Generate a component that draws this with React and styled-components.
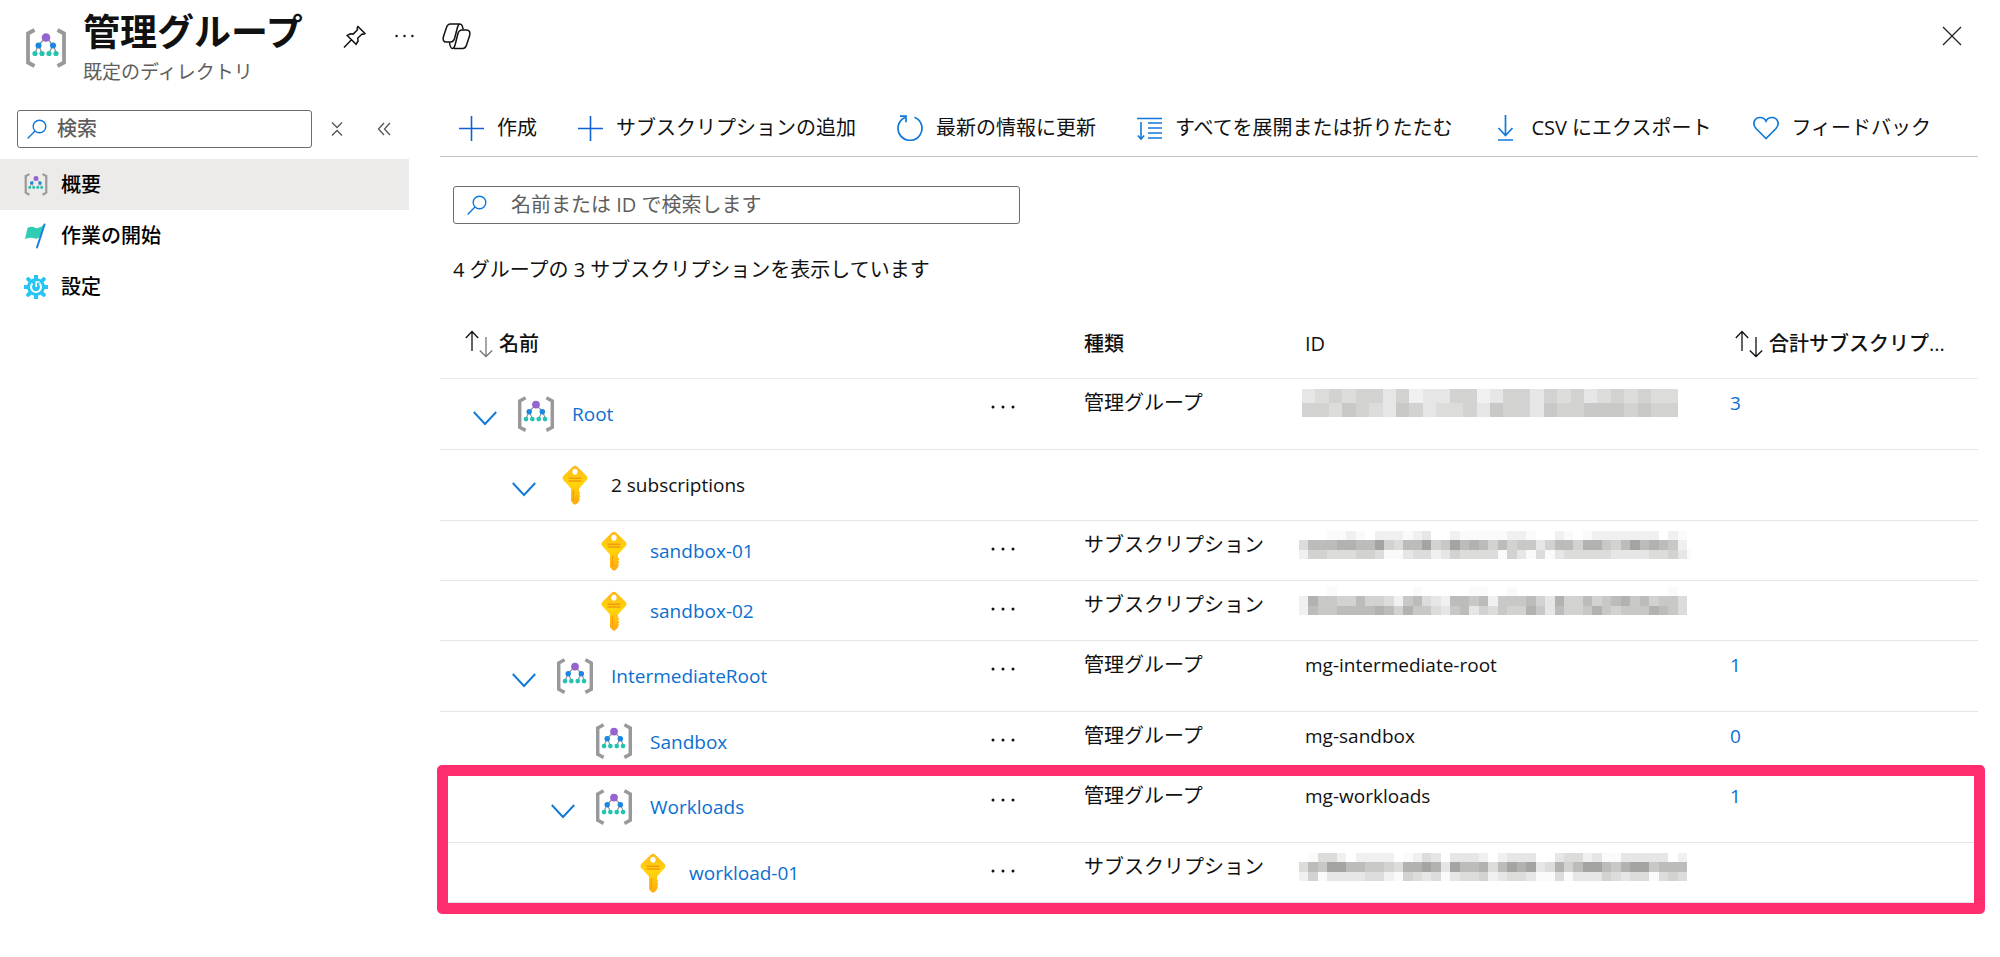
import styled, { createGlobalStyle } from "styled-components";

const shades = {
  a: "#fafafa",
  b: "#f0f0f0",
  c: "#e6e6e6",
  d: "#dcdcdb",
  e: "#d2d2d1",
  f: "#c8c8c7",
  g: "#bcbcbb",
  h: "#b2b2b1",
  i: "#a4a4a3",
};

// masked ids: one letter per block, see shades
const rows = [
  {
    name: "Root",
    level: 0,
    kind: "group",
    open: true,
    tall: true,
    type: "管理グループ",
    mosaic: {
      x: 3,
      y: 0,
      w: 376 / 28,
      h: 14,
      lines: ["cdedeecebcceebceecedecdededd", "eedfedcfecddecfeecfeefffefee"],
    },
    total: 3,
  },
  { name: "2 subscriptions", level: 1, kind: "key", open: true, tall: true, plain: true },
  {
    name: "sandbox-01",
    level: 2,
    kind: "key",
    type: "サブスクリプション",
    mosaic: {
      x: 0,
      y: 0,
      w: 388 / 41,
      h: 28 / 3,
      lines: [
        "...aaba.bbbabc..baaaaabba..ba.abbbbbbb.ba",
        "dggghhggiedggiefighgegeffceggehhfegighgfb",
        "beedddeedaacddbceddddaecadacdddddccccddeca",
      ],
    },
  },
  {
    name: "sandbox-02",
    level: 2,
    kind: "key",
    type: "サブスクリプション",
    mosaic: {
      x: 0,
      y: -4,
      w: 388 / 41,
      h: 28 / 3,
      lines: [
        "...a........a.....aa..a................a.",
        "bhffeegeedbfgdcbggfgbfffgecheegefghfgeffd",
        "bgffgggghgehffdcfgcedfeehfcgeefhfefffhgfd",
      ],
    },
  },
  {
    name: "IntermediateRoot",
    level: 1,
    kind: "group",
    open: true,
    tall: true,
    type: "管理グループ",
    id: "mg-intermediate-root",
    total: 1,
  },
  { name: "Sandbox", level: 2, kind: "group", type: "管理グループ", id: "mg-sandbox", total: 0 },
  {
    name: "Workloads",
    level: 2,
    kind: "group",
    open: true,
    tall: true,
    type: "管理グループ",
    id: "mg-workloads",
    total: 1,
  },
  {
    name: "workload-01",
    level: 3,
    kind: "key",
    type: "サブスクリプション",
    mosaic: {
      x: 0,
      y: 0,
      w: 388 / 41,
      h: 28 / 3,
      lines: [
        ".addb.bbbb.abdc.cccb.bccc..cddbcaaccccc.b",
        "dgfiiggffedhhihcigghdgihicdhegiigfhiifggg",
        "beaccccddbaedcdacddebcddcaadacccedcddaded",
      ],
    },
  },
];

function GroupIcon({ width }) {
  return (
    <svg width={width} viewBox="0 0 42 40" fill="none">
      <path d="M9.5 2 3 5.5v29L9.5 38M32.5 2 39 5.5v29L32.5 38" stroke="#999" strokeWidth="3.8" />
      <path
        d="M21 9.5 13.5 17 10 25M13.5 17l3.5 8M21 9.5l7 7.500 3.500 8M28 17l-4 8"
        stroke="#8a8a8a"
        strokeWidth="1.2"
      />
      <circle cx="21" cy="9.5" r="4.3" fill="#9464d0" />
      <circle cx="13.5" cy="17.5" r="3" fill="#1787e0" />
      <circle cx="28" cy="17.5" r="3" fill="#1787e0" />
      <circle cx="10" cy="25.5" r="2.6" fill="#22c3b0" />
      <circle cx="17" cy="25.5" r="2.6" fill="#22c3b0" />
      <circle cx="24" cy="25.5" r="2.6" fill="#22c3b0" />
      <circle cx="31" cy="25.5" r="2.6" fill="#22c3b0" />
    </svg>
  );
}

function KeyIcon() {
  return (
    <svg width="26" height="40" viewBox="0 0 26 40">
      <defs>
        <linearGradient id="gold" x1="0" y1="0" x2="0" y2="1">
          <stop offset="0" stopColor="#ffb61a" />
          <stop offset="0.45" stopColor="#ffd60a" />
          <stop offset="1" stopColor="#ffa80f" />
        </linearGradient>
      </defs>
      <path
        fill="url(#gold)"
        fillRule="evenodd"
        d="M11 1.4q2-1.4 4 0l9.5 9.3q2 2.3 0 4.6L17 23.500v3l1.500 1.500-1.500 1.600 1.500 1.600-1.500 1.600 1 1.200-1 1.500v1L14.500 39q-1.500 1.200-3 0L9 36V23.500L1.500 15.300q-2-2.300 0-4.600zM13 3.700a2.600 3 0 1 0 0 6 2.600 3 0 1 0 0-6z"
      />
      <path d="M6.5 13.300h13M6.500 16h13" stroke="#f59b0b" strokeWidth="1.4" />
      <path d="M11.5 25v11" stroke="#ff9a10" strokeWidth="1.2" />
    </svg>
  );
}

function FlagIcon() {
  return (
    <svg width="24" height="26" viewBox="0 0 24 26" fill="none">
      <path d="M3.5 5q4.500-2.500 8 0 3.500 1 8-3L16 13.500q-3 3.500-6.500 1.500-3-1-8.500 1z" fill="#2fcdb4" />
      <path d="M20.5 1.5 13 24.500" stroke="#1a7de0" strokeWidth="2" strokeLinecap="round" />
    </svg>
  );
}

function GearIcon() {
  return (
    <svg width="24" height="24" viewBox="0 0 24 24" fill="none">
      <circle cx="12" cy="12" r="9" fill="#27c5f3" />
      <path
        d="M12 .8v22.400M.8 12h22.400M4.200 4.200l15.600 15.600M19.800 4.200 4.200 19.800"
        stroke="#27c5f3"
        strokeWidth="4"
        strokeLinecap="round"
      />
      <path d="M8.500 8.500a5 5 0 1 0 7 0" stroke="#fff" strokeWidth="2" />
      <path d="M12.200 12V7h3.500" stroke="#fff" strokeWidth="1.600" />
    </svg>
  );
}

function SearchIcon() {
  return (
    <svg width="20" height="20" viewBox="0 0 20 20" fill="none" stroke="#0f78d8" strokeWidth="1.4">
      <circle cx="12.5" cy="7.5" r="6.3" />
      <path d="M8 12 .6 19.4" />
    </svg>
  );
}

function PlusIcon() {
  return (
    <svg width="25" height="25" viewBox="0 0 25 25" stroke="#0f62d0" strokeWidth="1.6">
      <path d="M12.5 0v25M0 12.500h25" />
    </svg>
  );
}

function RefreshIcon() {
  return (
    <svg width="26" height="26" viewBox="0 0 26 26" fill="none" stroke="#0f78d8" strokeWidth="1.7">
      <path d="M17.5 2.200A12 12 0 1 1 8 2.400" />
      <path d="M3 1.2h6v6" />
    </svg>
  );
}

function ExpandIcon() {
  return (
    <svg width="25" height="25" viewBox="0 0 25 25" fill="none" stroke="#0f78d8" strokeWidth="1.6">
      <path d="M0 2.500h25M11 7h14M11 12h14M11 17h14M11 22h14M4 6v17M.8 19.500 4 23l3.200-3.500" />
    </svg>
  );
}

function DownloadIcon() {
  return (
    <svg width="25" height="26" viewBox="0 0 25 26" fill="none" stroke="#0f78d8" strokeWidth="1.7">
      <path d="M12.5 0v20M5.500 13l7 7.500 7-7.500M5 25h15" />
    </svg>
  );
}

function HeartIcon() {
  return (
    <svg width="26" height="24" viewBox="0 0 26 24" fill="none" stroke="#0f78d8" strokeWidth="1.7">
      <path d="M13 22.500 3 12.500C-1.500 7 2 1.500 7 1.500c3 0 5 1.500 6 3.500 1-2 3-3.500 6-3.500 5 0 8.500 5.500 4 11z" />
    </svg>
  );
}

function SortIcon({ faded }) {
  return (
    <svg width="28" height="28" viewBox="0 0 28 28" fill="none" stroke="#111" strokeWidth="1.3">
      <path d="M7 21V2M.8 8 7 1.500 13.200 8" />
      <path d="M21 7v19M14.800 20.500 21 26.500l6.200-6" stroke={faded ? "#777" : "#111"} />
    </svg>
  );
}

function ChevronIcon() {
  return (
    <svg width="24" height="24" viewBox="0 0 24 24" fill="none" stroke="#0f78d8" strokeWidth="1.9">
      <path d="M.8 10 12 22 23.200 10" />
    </svg>
  );
}

function DotsIcon({ width }) {
  return (
    <svg width={width} height="4" viewBox="0 0 24 4" fill="#111">
      <circle cx="2" cy="2" r="1.5" />
      <circle cx="12" cy="2" r="1.5" />
      <circle cx="22" cy="2" r="1.5" />
    </svg>
  );
}

function PinIcon() {
  return (
    <svg width="24" height="24" viewBox="0 0 24 24" fill="none" stroke="#111" strokeWidth="1.5">
      <path d="M15 2.500 22 9.500l-1.500.8-1.500-.3-4.300 4.300.4 2.700-2 3.200L4.200 11.500l3.200-1.700 2.800.3L14.500 5.700l-.3-1.800zM8.500 15.800 1 23.500" />
    </svg>
  );
}

function CopilotIcon() {
  return (
    <svg width="29" height="27" viewBox="0 0 29 27" fill="none" stroke="#111" strokeWidth="1.5">
      <path d="M17 1H8.500C6 1 5 2.500 4.300 5L1.500 13.500C.5 17 1.500 19 4.500 19h4c2.500 0 3.500-1.500 4.200-4L15.300 5C16 2.500 16.500 1 18 1c2 0 2.500 1.500 3.200 5.500" />
      <path d="M12 25.500h8.500c2.500 0 3.500-1.500 4.200-4l2.800-8.500c1-3.500 0-6-3-6h-4.500c-2.500 0-3.500 1.500-4.200 4L13.200 21.500c-.7 2.500-1.200 4-2.700 4-2 0-2.500-2-3-6" />
    </svg>
  );
}

function Mosaic({ data }) {
  return (
    <svg width="392" height="38" viewBox="0 -6 392 38" shapeRendering="crispEdges" aria-hidden="true">
      {data.lines.map((line, r) =>
        line.split("").map((c, i) =>
          c === "." ? null : (
            <rect
              key={`${r}-${i}`}
              x={data.x + i * data.w}
              y={data.y + r * data.h}
              width={data.w}
              height={data.h}
              fill={shades[c]}
            />
          )
        )
      )}
    </svg>
  );
}

function GroupRow({ row }) {
  return (
    <tr>
      <Cell $tall={row.tall}>
        <NameBox $level={row.level}>
          <Toggle>
            {row.open && (
              <IconButton aria-label="折りたたむ">
                <ChevronIcon />
              </IconButton>
            )}
          </Toggle>
          <RowIcon>{row.kind === "group" ? <GroupIcon width={38} /> : <KeyIcon />}</RowIcon>
          {row.plain ? <span>{row.name}</span> : <Link href="#">{row.name}</Link>}
        </NameBox>
      </Cell>
      <TopCell>
        {!row.plain && (
          <MoreButton aria-label="その他">
            <DotsIcon width={24} />
          </MoreButton>
        )}
      </TopCell>
      <TopCell $cjk>{row.type}</TopCell>
      {row.mosaic ? (
        <MosaicCell>
          <Mosaic data={row.mosaic} />
        </MosaicCell>
      ) : (
        <TopCell>{row.id}</TopCell>
      )}
      <TopCell>{row.total !== undefined && <Link href="#">{row.total}</Link>}</TopCell>
    </tr>
  );
}

export default function App() {
  return (
    <>
      <GlobalStyle />
      <Header>
        <GroupIcon width={42} />
        <TitleBlock>
          <h1>管理グループ</h1>
          <p>既定のディレクトリ</p>
        </TitleBlock>
        <HeaderActions>
          <IconButton aria-label="ピン留め">
            <PinIcon />
          </IconButton>
          <IconButton aria-label="その他">
            <DotsIcon width={19} />
          </IconButton>
          <IconButton aria-label="Copilot">
            <CopilotIcon />
          </IconButton>
        </HeaderActions>
        <IconButton aria-label="閉じる">
          <svg width="20" height="20" viewBox="0 0 20 20" stroke="#222" strokeWidth="1.3">
            <path d="m1 1 18 18M19 1 1 19" />
          </svg>
        </IconButton>
      </Header>
      <Body>
        <Sidebar>
          <SideTools>
            <SideSearch>
              <SearchIcon />
              <input type="text" placeholder="検索" aria-label="検索" />
            </SideSearch>
            <SideButtons>
              <IconButton aria-label="すべて折りたたむ">
                <svg width="12" height="16" viewBox="0 0 12 16" fill="none" stroke="#555" strokeWidth="1.3">
                  <path d="m1 1.500 5 5 5-5M1 14.500l5-5 5 5" />
                </svg>
              </IconButton>
              <IconButton aria-label="メニューを閉じる">
                <svg width="14" height="14" viewBox="0 0 14 14" fill="none" stroke="#555" strokeWidth="1.3">
                  <path d="M7 1 1.500 7 7 13M13 1 7.500 7l5.500 6" />
                </svg>
              </IconButton>
            </SideButtons>
          </SideTools>
          <nav>
            <SideItem href="#" $active>
              <GroupIcon width={24} />
              概要
            </SideItem>
            <SideItem href="#">
              <FlagIcon />
              作業の開始
            </SideItem>
            <SideItem href="#">
              <GearIcon />
              設定
            </SideItem>
          </nav>
        </Sidebar>
        <Main>
          <Toolbar>
            <ToolButton>
              <PlusIcon />
              作成
            </ToolButton>
            <ToolButton>
              <PlusIcon />
              サブスクリプションの追加
            </ToolButton>
            <ToolButton>
              <RefreshIcon />
              最新の情報に更新
            </ToolButton>
            <ToolButton>
              <ExpandIcon />
              すべてを展開または折りたたむ
            </ToolButton>
            <ToolButton>
              <DownloadIcon />
              CSV にエクスポート
            </ToolButton>
            <ToolButton>
              <HeartIcon />
              フィードバック
            </ToolButton>
          </Toolbar>
          <TableSearch>
            <SearchIcon />
            <input
              type="text"
              placeholder="名前または ID で検索します"
              aria-label="名前または ID で検索します"
            />
          </TableSearch>
          <Count>4 グループの 3 サブスクリプションを表示しています</Count>
          <TableWrap>
            <Table>
              <colgroup>
                <col />
                <col width="99" />
                <col width="221" />
                <col width="425" />
                <col width="254" />
              </colgroup>
              <thead>
                <tr>
                  <HeadCell>
                    <SortButton $indent={25}>
                      <SortIcon faded />
                      名前
                    </SortButton>
                  </HeadCell>
                  <HeadCell />
                  <HeadCell>種類</HeadCell>
                  <HeadCell>ID</HeadCell>
                  <HeadCell>
                    <SortButton $indent={11}>
                      <SortIcon />
                      合計サブスクリプ...
                    </SortButton>
                  </HeadCell>
                </tr>
              </thead>
              <tbody>
                {rows.map((row) => (
                  <GroupRow key={row.name} row={row} />
                ))}
              </tbody>
            </Table>
            <Highlight />
          </TableWrap>
        </Main>
      </Body>
    </>
  );
}

const GlobalStyle = createGlobalStyle`
  * {
    box-sizing: border-box;
  }

  body {
    margin: 0;
    background: #fff;
    color: #111;
    font-family: "Open Sans", "Noto Sans CJK JP", sans-serif;
    font-size: 20px;
    line-height: 28px;
  }

  h1, p {
    margin: 0;
  }

  svg {
    display: block;
    flex-shrink: 0;
  }

  button, input {
    font: inherit;
    color: inherit;
    border: none;
    background: none;
    padding: 0;
  }
`;

const Header = styled.header`
  display: flex;
  align-items: flex-start;
  height: 96px;
  padding: 0 38px 0 25px;

  > svg {
    margin-top: 28px;
  }

  > button {
    margin: 22px 0 0 auto;
  }
`;

const TitleBlock = styled.div`
  margin-left: 16px;
  padding-top: 8px;

  h1 {
    font-size: 37px;
    line-height: 48px;
    font-weight: bold;
  }

  p {
    font-size: 19px;
    line-height: 32px;
    color: #605e5c;
  }
`;

const IconButton = styled.button`
  display: flex;
  align-items: center;
  justify-content: center;
  min-height: 28px;
`;

const HeaderActions = styled.div`
  display: flex;
  align-items: center;
  gap: 28px;
  margin: 22px 0 0 40px;
`;

const Body = styled.div`
  display: flex;
  gap: 31px;
  padding-right: 22px;
`;

const Sidebar = styled.aside`
  width: 409px;
  flex-shrink: 0;
`;

const SideTools = styled.div`
  display: flex;
  align-items: center;
  height: 63px;
  padding: 2px 18px 0 17px;
  gap: 19px;
`;

const SideButtons = styled.div`
  display: flex;
  gap: 34px;
`;

const SearchBox = styled.label`
  display: flex;
  align-items: center;
  height: 38px;
  border: 1px solid #6e6c6a;
  border-radius: 3px;

  input {
    flex: 1;
    min-width: 0;
    outline: none;
  }

  input::placeholder {
    color: #605e5c;
    opacity: 1;
  }
`;

const SideSearch = styled(SearchBox)`
  width: 295px;
  padding-left: 9px;
  gap: 10px;
  font-weight: 500;
`;

const TableSearch = styled(SearchBox)`
  width: 567px;
  margin: 29px 0 0 13px;
  padding-left: 13px;
  gap: 24px;
`;

const SideItem = styled.a`
  display: flex;
  align-items: center;
  gap: 13px;
  height: 51px;
  padding-left: 24px;
  font-weight: 500;
  color: #000;
  text-decoration: none;
  background: ${(props) => (props.$active ? "#edebe9" : "transparent")};
`;

const Main = styled.main`
  flex: 1;
  min-width: 0;
  padding-bottom: 52px;
`;

const Toolbar = styled.div`
  display: flex;
  align-items: center;
  gap: 41px;
  height: 61px;
  padding: 4px 0 0 19px;
  border-bottom: 1px solid #c4c3c1;
`;

const ToolButton = styled.button`
  display: flex;
  align-items: center;
  gap: 13px;
  white-space: nowrap;
`;

const Count = styled.p`
  margin: 32px 0 25px 13px;
`;

const TableWrap = styled.div`
  position: relative;
`;

const Table = styled.table`
  width: 100%;
  table-layout: fixed;
  border-spacing: 0;
`;

const HeadCell = styled.th`
  height: 70px;
  padding: 0 6px;
  text-align: left;
  font-weight: 500;
  white-space: nowrap;
  border-bottom: 1px solid #edebe9;
`;

const SortButton = styled.button`
  display: flex;
  align-items: center;
  gap: 6px;
  padding-left: ${(props) => props.$indent - 6}px;
`;

const Cell = styled.td`
  height: ${(props) => (props.$tall ? 71 : 60)}px;
  padding: 0;
  border-bottom: 1px solid #e6e5e4;
`;

const NameBox = styled.div`
  display: flex;
  align-items: center;
  padding-left: ${(props) => 33 + props.$level * 39}px;
  font-size: 19px;
`;

const Toggle = styled.div`
  width: 24px;
`;

const RowIcon = styled.div`
  display: flex;
  justify-content: center;
  width: 38px;
  margin: 0 17px 0 20px;
`;

const Link = styled.a`
  color: #0b6fd0;
  text-decoration: none;
`;

const TopCell = styled.td`
  padding: 10px 6px 0;
  vertical-align: top;
  font-size: ${(props) => (props.$cjk ? 20 : 19)}px;
  border-bottom: 1px solid #e6e5e4;
`;

const MosaicCell = styled(TopCell)`
  padding: 4px 0 0;
`;

const MoreButton = styled(IconButton)`
  margin-left: 6px;
  padding-top: 8px;
`;

const Highlight = styled.div`
  position: absolute;
  left: -3px;
  right: -7px;
  bottom: -11px;
  height: 149px;
  border: 11px solid #ff2d6e;
  border-radius: 5px;
  pointer-events: none;
`;
